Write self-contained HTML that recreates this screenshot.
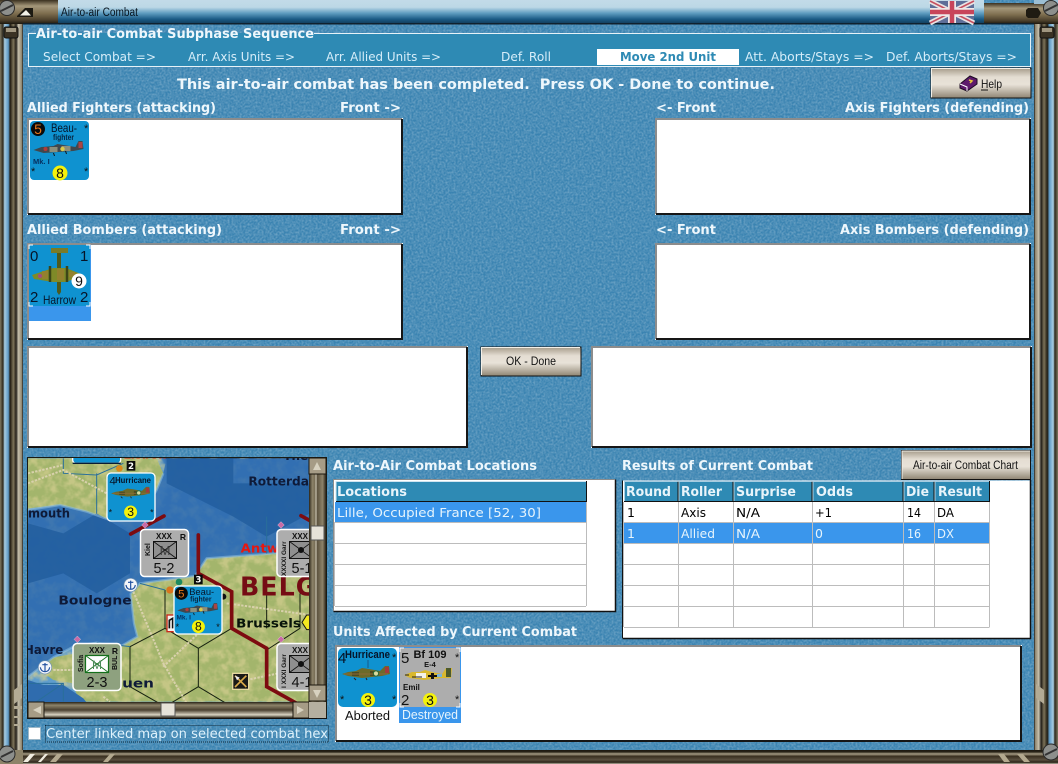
<!DOCTYPE html>
<html><head><meta charset="utf-8"><title>Air-to-air Combat</title>
<style>
html,body{margin:0;padding:0;background:#3a83b1;width:1058px;height:764px;overflow:hidden}
svg{display:block;position:absolute;left:0;top:0}
text{font-family:"DejaVu Sans",sans-serif;white-space:pre}
.b{font-weight:bold;fill:#eef7fc;font-size:13px}
.s{fill:#d6edf9;font-size:12.5px}
.t{fill:#000;font-size:12.5px}
.h{font-weight:bold;fill:#e8f4fa;font-size:13px}
.w{fill:#e6f4fc;font-size:12.5px}
.a{font-family:"Liberation Sans",sans-serif}
.m{font-weight:bold;fill:#0e1a38;font-size:38px}
</style></head><body>
<svg width="1058" height="764" viewBox="0 0 1058 764" xmlns="http://www.w3.org/2000/svg">
<defs>
<filter id="n" x="0" y="0" width="100%" height="100%"><feTurbulence type="fractalNoise" baseFrequency=".5" numOctaves="3" seed="4"/><feColorMatrix values="0 0 0 0 1 0 0 0 0 1 0 0 0 0 1 1.6 0 0 0 -.5"/></filter>
<filter id="l" x="0" y="0" width="100%" height="100%"><feTurbulence type="fractalNoise" baseFrequency=".035" numOctaves="3" seed="7"/><feColorMatrix values="0 0 0 0 .66 0 0 0 0 .62 0 0 0 0 .28 3 0 0 0 -1.2"/></filter>
<filter id="bl"><feGaussianBlur stdDeviation="9"/></filter>
<clipPath id="mc"><rect x="28" y="458" width="281" height="244"/></clipPath>
<linearGradient id="tb" x1="0" y1="0" x2="0" y2="1"><stop offset="0" stop-color="#c3dbe8"/><stop offset=".3" stop-color="#bcd8e6"/><stop offset=".55" stop-color="#5e9cc0"/><stop offset=".8" stop-color="#1a5a85"/><stop offset="1" stop-color="#123a58"/></linearGradient>
<linearGradient id="br" x1="0" y1="0" x2="0" y2="1"><stop offset="0" stop-color="#3a3020"/><stop offset=".25" stop-color="#a4977a"/><stop offset=".55" stop-color="#7f6f50"/><stop offset=".85" stop-color="#4a3e2a"/><stop offset="1" stop-color="#1c170e"/></linearGradient>
<linearGradient id="lf" x1="0" y1="0" x2="1" y2="0"><stop offset="0" stop-color="#7f7861"/><stop offset=".13" stop-color="#2f2a1e"/><stop offset=".2" stop-color="#a8cde2"/><stop offset=".36" stop-color="#5f9ac6"/><stop offset=".44" stop-color="#1f1a10"/><stop offset=".58" stop-color="#7d7359"/><stop offset=".7" stop-color="#24201a"/><stop offset=".8" stop-color="#c6c0ad"/><stop offset=".95" stop-color="#8d846e"/><stop offset="1" stop-color="#111"/></linearGradient>
<linearGradient id="rf" x1="1" y1="0" x2="0" y2="0"><stop offset="0" stop-color="#7f7861"/><stop offset=".13" stop-color="#2f2a1e"/><stop offset=".2" stop-color="#a8cde2"/><stop offset=".36" stop-color="#5f9ac6"/><stop offset=".44" stop-color="#1f1a10"/><stop offset=".58" stop-color="#7d7359"/><stop offset=".7" stop-color="#24201a"/><stop offset=".8" stop-color="#c6c0ad"/><stop offset=".95" stop-color="#8d846e"/><stop offset="1" stop-color="#111"/></linearGradient>
<linearGradient id="bt" x1="0" y1="0" x2="0" y2="1"><stop offset="0" stop-color="#a49a88"/><stop offset=".3" stop-color="#e4ddd2"/><stop offset=".55" stop-color="#e8e2d8"/><stop offset="1" stop-color="#8f8573"/></linearGradient>
<linearGradient id="bb" x1="0" y1="0" x2="0" y2="1"><stop offset="0" stop-color="#1c180f"/><stop offset=".14" stop-color="#2a2418"/><stop offset=".28" stop-color="#a79d85"/><stop offset=".45" stop-color="#3a3020"/><stop offset=".7" stop-color="#5a5040"/><stop offset=".88" stop-color="#2a2418"/><stop offset="1" stop-color="#bdb7a5"/></linearGradient>
<linearGradient id="st" x1="0" y1="0" x2="1" y2="0"><stop offset="0" stop-color="#2a2418"/><stop offset=".2" stop-color="#8d8369"/><stop offset=".5" stop-color="#5e5440"/><stop offset=".8" stop-color="#8d8369"/><stop offset="1" stop-color="#2a2418"/></linearGradient>
<linearGradient id="sh" x1="0" y1="0" x2="0" y2="1"><stop offset="0" stop-color="#2a2418"/><stop offset=".2" stop-color="#8d8369"/><stop offset=".5" stop-color="#4a4030"/><stop offset=".8" stop-color="#d8d2c0"/><stop offset="1" stop-color="#2a2418"/></linearGradient>
<symbol id="hur" viewBox="0 0 50 16"><path d="M0 9 L6 7 L14 6 L20 3 L27 4 L38 6 L43 1 L47 1 L48 9 L40 11 L20 13 L6 11Z" fill="#6c6a2a"/><path d="M10 7h7v4h-7zM28 6h8v5h-8z" fill="#4e4a20"/><path d="M2 9h44" stroke="#8a6a38"/><circle cx="34" cy="8.500" r="2.600" fill="#d8d8a0" stroke="#2b6b3a"/><path d="M43 2h4v6h-4z" fill="#a33a3a"/><path d="M12 13l2 2M24 13l1 2" stroke="#222"/></symbol>
<symbol id="bea" viewBox="0 0 50 16"><path d="M0 10 L8 7 L20 6 L24 4 L30 5 L42 7 L45 1 L49 1 L50 9 L40 11 L10 13Z" fill="#40484e"/><path d="M16 7h8v5h-8zM28 6h9v5h-9z" fill="#8b8e7c"/><circle cx="29" cy="9" r="2.200" fill="#d9c94a"/><circle cx="12" cy="9" r="2" fill="#b03a3a"/><path d="M45 2h4v6h-4z" fill="#a44"/><path d="M20 13l1 3M32 11l1 3" stroke="#111"/></symbol>
<symbol id="bf" viewBox="0 0 50 16"><path d="M0 8 L8 5 L16 5 L21 3 L28 5 L38 7 L42 1 L48 1 L47 11 L38 11 L20 13 L6 11Z" fill="#d9b82e"/><path d="M12 6h10v5H12z" fill="#f4f2e8"/><path d="M27 6h3v6h-3zM24 8h9v2h-9z" fill="#111"/><path d="M33 7h5v3h-5z" fill="#79b4d8"/><path d="M42 1h5v9h-5z" fill="#4d5a2c"/><path d="M1 8h4M8 10h10" stroke="#222"/></symbol>
</defs>

<!-- background -->
<rect width="1058" height="764" fill="#3a83b1"/>
<rect width="1058" height="764" filter="url(#n)" opacity=".3"/>

<!-- frame -->
<rect x="0" y="24" width="23" height="728" fill="url(#lf)"/>
<rect x="1034" y="24" width="24" height="728" fill="url(#rf)"/>
<path d="M14 690l8-6v14l-8 6zM14 706h8v3h-8zM14 716h6v2h-6zM14 724h6v2h-6z" fill="#b3ab95"/>
<path d="M1044 690l-8-6v14l8 6z" fill="#b3ab95"/>
<rect x="4" y="27" width="14" height="11" rx="2" fill="#3a3224" stroke="#111"/>
<rect x="6" y="28" width="10" height="4" fill="#a09680"/>
<rect x="1040" y="27" width="14" height="11" rx="2" fill="#3a3224" stroke="#111"/>
<rect x="1042" y="28" width="10" height="4" fill="#a09680"/>
<rect x="58" y="0" width="926" height="24" fill="url(#tb)"/>
<rect x="0" y="0" width="58" height="24" fill="url(#br)"/>
<rect x="984" y="3" width="74" height="21" fill="url(#br)"/>
<rect x="1034" y="0" width="24" height="4" fill="#9cbfd4"/>
<path d="M17 16 L25 8 L33 8 L33 17 L17 17Z" fill="#1d1a12"/><path d="M20 15.500 L26 10 L31 15.500Z" fill="#f2f0e6"/>
<circle cx="7" cy="8" r="7.500" fill="#8d8f8c" stroke="#2a2a2a"/><path d="M1 11L13 5" stroke="#333" stroke-width="2"/>
<path d="M1028 8h10l3 5-3 5h-10l-2-2v-6z" fill="#1f1b12"/>
<circle cx="1051" cy="8" r="7.500" fill="#8d8f8c" stroke="#2a2a2a"/><path d="M1045 11L1057 5" stroke="#333" stroke-width="2"/>
<rect x="23" y="23" width="1011" height="1.500" fill="#10212e"/>
<text x="61" y="16" class="a" font-size="11.500" fill="#08141e" textLength="77" lengthAdjust="spacingAndGlyphs">Air-to-air Combat</text>
<!-- flag -->
<g>
<rect x="930" y="1" width="44" height="22" fill="#5e6e98"/>
<path d="M930 1L974 23M974 1L930 23" stroke="#e8e4e4" stroke-width="5"/>
<path d="M930 1L974 23M974 1L930 23" stroke="#c65060" stroke-width="1.600"/>
<path d="M952 1V23M930 12H974" stroke="#eee8e8" stroke-width="8"/>
<path d="M952 1V23M930 12H974" stroke="#c8455a" stroke-width="4.500"/>
</g>
<rect x="0" y="750" width="1058" height="14" fill="url(#bb)"/>
<rect x="0" y="750" width="23" height="14" fill="#8d8369"/>
<path d="M23 762l7-8h5l-7 8zM38 762l7-8h3l-7 8z" fill="#f0ece0"/>
<path d="M50 762l7-8h6l-7 8zM103 762l7-8h5l-7 8z" fill="#b3a98f"/>
<path d="M998 754l6 8h6l-6-8zM1017 754l7 8h6l-7-8z" fill="#b3a98f"/>
<circle cx="7" cy="754" r="8" fill="#8d8f8c" stroke="#2a2a2a"/><path d="M1 757L13 751" stroke="#333" stroke-width="2"/>
<circle cx="1051" cy="752" r="8" fill="#8d8f8c" stroke="#2a2a2a"/><path d="M1045 755L1057 749" stroke="#333" stroke-width="2"/>

<!-- sequence panel -->
<rect x="28" y="33" width="1003" height="33" fill="#2e8ab4"/>
<path d="M36 33.500H28.500V66.500H1030.500V33.500H314" fill="none" stroke="#e6f2f8" stroke-width="1"/>
<rect x="597" y="49" width="142" height="16" fill="#fff"/>
<text x="36" y="38" class="b" textLength="278" lengthAdjust="spacingAndGlyphs">Air-to-air Combat Subphase Sequence</text>
<text x="43" y="61" class="s" textLength="113" lengthAdjust="spacingAndGlyphs">Select Combat =&gt;</text>
<text x="188" y="61" class="s" textLength="107" lengthAdjust="spacingAndGlyphs">Arr. Axis Units =&gt;</text>
<text x="326" y="61" class="s" textLength="115" lengthAdjust="spacingAndGlyphs">Arr. Allied Units =&gt;</text>
<text x="501" y="61" class="s" textLength="50" lengthAdjust="spacingAndGlyphs">Def. Roll</text>
<text x="620" y="61" class="s" font-weight="bold" style="fill:#2e8ab4" textLength="96" lengthAdjust="spacingAndGlyphs">Move 2nd Unit</text>
<text x="745" y="61" class="s" textLength="129" lengthAdjust="spacingAndGlyphs">Att. Aborts/Stays =&gt;</text>
<text x="886" y="61" class="s" textLength="131" lengthAdjust="spacingAndGlyphs">Def. Aborts/Stays =&gt;</text>

<text x="177" y="89" class="b" style="font-size:14.500px" textLength="598" lengthAdjust="spacingAndGlyphs">This air-to-air combat has been completed.  Press OK - Done to continue.</text>

<!-- help -->
<rect x="931" y="68" width="100" height="30" fill="url(#bt)" stroke="#111"/>
<path d="M931.500 97.500V68.500H1030" fill="none" stroke="#f4f0e8"/>
<path d="M960 84l10-8 7 3 0 5-10 7-7-3z" fill="#5e1a6c" stroke="#1c0a22"/>
<path d="M960 84l7 3 0 4" fill="none" stroke="#fff"/><path d="M969 80l3 1-2 2" fill="none" stroke="#e8c93a" stroke-width="1.500"/>
<text x="981" y="88" class="a" font-size="12" fill="#111" textLength="21" lengthAdjust="spacingAndGlyphs">Help</text>
<path d="M981 90h7" stroke="#111"/>

<!-- labels -->
<text x="27" y="112" class="b" textLength="189" lengthAdjust="spacingAndGlyphs">Allied Fighters (attacking)</text>
<text x="340" y="112" class="b" textLength="61" lengthAdjust="spacingAndGlyphs">Front -&gt;</text>
<text x="656" y="112" class="b" textLength="60" lengthAdjust="spacingAndGlyphs">&lt;- Front</text>
<text x="845" y="112" class="b" textLength="184" lengthAdjust="spacingAndGlyphs">Axis Fighters (defending)</text>
<text x="27" y="234" class="b" textLength="195" lengthAdjust="spacingAndGlyphs">Allied Bombers (attacking)</text>
<text x="340" y="234" class="b" textLength="61" lengthAdjust="spacingAndGlyphs">Front -&gt;</text>
<text x="656" y="234" class="b" textLength="60" lengthAdjust="spacingAndGlyphs">&lt;- Front</text>
<text x="840" y="234" class="b" textLength="189" lengthAdjust="spacingAndGlyphs">Axis Bombers (defending)</text>

<!-- boxes -->
<g fill="#fff">
<rect x="27" y="118" width="376" height="97"/>
<rect x="655" y="118" width="376" height="97"/>
<rect x="27" y="243" width="376" height="97"/>
<rect x="655" y="243" width="376" height="97"/>
<rect x="27" y="346" width="441" height="102"/>
<rect x="591" y="346" width="441" height="102"/>
</g>
<g fill="none" stroke="#8c8c8c" stroke-width="2">
<path d="M28 214V119H402M656 214V119H1030M28 339V244H402M656 339V244H1030M28 447V347H467M592 447V347H1031"/>
</g>
<g fill="none" stroke="#161616" stroke-width="2">
<path d="M28 214H402V119M656 214H1030V119M28 339H402V244M656 339H1030V244M28 447H467V347M592 447H1031V347"/>
</g>

<!-- Beau counter -->
<rect x="30" y="121" width="59" height="59" rx="4" fill="#0f92d0"/>
<circle cx="38" cy="129" r="7" fill="#0a0a0a"/>
<text x="38" y="134" text-anchor="middle" font-size="14" style="fill:#e8761a" class="a">5</text>
<text x="51" y="132" font-size="12" class="a" textLength="26" lengthAdjust="spacingAndGlyphs" fill="#061428">Beau-</text>
<text x="53" y="140" font-size="8.500" font-weight="bold" class="a" textLength="21" lengthAdjust="spacingAndGlyphs" fill="#062440">fighter</text>
<use href="#bea" x="33" y="140" width="51" height="16"/>
<text x="33" y="164" font-size="7.500" font-weight="bold" class="a" fill="#063060">Mk. I</text>
<text x="84" y="132" font-size="11" fill="#111" class="a">*</text>
<text x="31" y="175" font-size="11" fill="#111" class="a">*</text>
<text x="84" y="175" font-size="11" fill="#111" class="a">*</text>
<circle cx="60" cy="173" r="7.500" fill="#f4f20c"/>
<text x="60" y="178" text-anchor="middle" font-size="14" class="a" fill="#111">8</text>

<!-- Harrow -->
<rect x="29" y="245" width="62" height="76" fill="#3a96ec"/>
<rect x="29" y="245" width="61" height="61" fill="#0f92d0"/>
<path d="M29 249v-4h4M86 245h4v4M29 302v4h4M86 306h4v-4" stroke="#fff" fill="none"/>
<path d="M57 250h4v42l-2 3-2-3z" fill="#4d5a1e"/><path d="M51 248h17v5H51z" fill="#7a7b28"/>
<path d="M32 275l21-7h13l15 6 0 3-16 5H53l-19-3z" fill="#7f8a28"/>
<path d="M42 271h6v8h-6zM57 269h7v11h-7zM69 272h6v5h-6z" fill="#94812e"/><circle cx="40" cy="276" r="2" fill="#a24a86"/>
<path d="M50 266v16M67 266v16" stroke="#3d4618" stroke-width="2.500"/>
<text x="30" y="261" font-size="15" class="a" fill="#061428">0</text>
<text x="80" y="261" font-size="15" class="a" fill="#061428">1</text>
<text x="30" y="302" font-size="15" class="a" fill="#061428">2</text>
<text x="80" y="302" font-size="15" class="a" fill="#061428">2</text>
<text x="43" y="304" font-size="12" class="a" fill="#061428" textLength="33" lengthAdjust="spacingAndGlyphs">Harrow</text>
<circle cx="79" cy="281" r="7.500" fill="#fff"/>
<text x="79" y="286" text-anchor="middle" font-size="14" class="a" fill="#111">9</text>

<!-- OK -->
<rect x="481" y="347" width="100" height="29" fill="url(#bt)" stroke="#111"/>
<path d="M481.500 375V347.500H580" fill="none" stroke="#f4f0e8"/>
<text x="506" y="365" class="a" font-size="11.500" fill="#111" textLength="50" lengthAdjust="spacingAndGlyphs">OK - Done</text>

<!-- map -->
<rect x="27" y="457" width="300" height="262" fill="#1a1a12"/>
<g clip-path="url(#mc)">
<g transform="translate(0,450) scale(.33333)">
<rect x="84" y="25" width="845" height="730" fill="#2b68aa"/>
<path d="M84 25H470L490 90 450 200 330 215 260 190 180 170 84 180Z" fill="#5f9dcd" stroke="#5f9dcd" stroke-width="34" filter="url(#bl)"/>
<path d="M930 300 800 310 620 330 580 380 420 400 390 430 400 520 410 560 360 590 290 575 220 590 160 625 84 690 84 755 930 755Z" fill="#5f9dcd" stroke="#5f9dcd" stroke-width="36" filter="url(#bl)"/>
<path d="M84 25H470L490 70 470 120 430 190 330 210 260 185 180 165 84 175Z" fill="#a3b56c"/>
<path d="M930 300 800 312 620 325 585 378 420 400 392 432 402 520 412 560 360 590 290 578 220 590 230 650 216 700 240 755 930 755Z" fill="#a3b56c"/>
<path d="M110 655 160 622 218 612 218 700 160 690Z" fill="#a3b56c"/>
<rect x="84" y="25" width="845" height="730" filter="url(#l)" opacity=".7"/>
<path d="M84 690 130 705 190 705 250 745 262 760 84 760Z" fill="#2f6cae"/>
<path d="M500 25H930V300L800 312 620 325 585 378 420 400 392 432 402 520 412 560 360 590 290 578 220 590 160 622 84 680V180L180 165 260 185 330 210 430 190 470 120 490 70Z" fill="#3370b2" opacity=".9"/>
<path d="M500 25H700L700 100 600 150 500 100ZM700 100H930V190L800 260 700 200 600 150ZM84 220 190 250 290 190 390 250 390 370 290 430 190 370 84 400Z" fill="#225e9f" opacity=".85"/>
<path d="M84 180 180 165 260 185 330 210 430 190 470 120 490 70M930 300 800 312 620 325 585 378 420 400 392 432 402 520 412 560 360 590 290 578 220 590 160 622 84 680" fill="none" stroke="#8cbde0" stroke-width="7" opacity=".55"/>
<!-- hex lines -->
<path d="M495 420V535L595 595 695 535M595 595V710M390 590V710L495 770M495 535 390 590M595 710 495 770M595 710 695 770M800 600 700 535M800 600 900 535M900 535V430M800 430V535" fill="none" stroke="#15200f" stroke-width="3"/>
<path d="M290 70V190M190 25V70L290 75 370 40M420 400 495 420M84 700H190V755M190 700 110 755M800 200V310M290 578 390 590" fill="none" stroke="#2a6f9a" stroke-width="3"/>
<!-- roads -->
<g fill="none" stroke="#d9d1ac" stroke-width="6" stroke-dasharray="7 4">
<path d="M400 425 490 640 560 760M490 650 590 555M680 460 930 495M84 100 190 60 320 130M740 690 930 650M84 70 190 45M160 660H218M310 740 330 755"/>
</g>
<!-- border -->
<g fill="none" stroke="#7d0b10" stroke-width="11" stroke-linecap="round">
<path d="M595 255V370L695 425V535L800 595V710L890 760M392 252 492 198M903 197 930 212"/>
</g>
<circle cx="670" cy="440" r="9" fill="#111"/>
<!-- text -->
<text x="84" y="202" class="m" textLength="126" lengthAdjust="spacingAndGlyphs">mouth</text>
<text x="745" y="107" class="m" textLength="220" lengthAdjust="spacingAndGlyphs">Rotterdam</text>
<text x="175" y="463" class="m" textLength="220" lengthAdjust="spacingAndGlyphs">Boulogne</text>
<text x="72" y="612" class="m" textLength="118" lengthAdjust="spacingAndGlyphs">Havre</text>
<text x="300" y="712" class="m" textLength="162" lengthAdjust="spacingAndGlyphs">Rouen</text>
<text x="708" y="532" class="m" style="fill:#08140a" textLength="195" lengthAdjust="spacingAndGlyphs">Brussels</text>
<text x="722" y="308" class="m" style="fill:#e81810" textLength="190" lengthAdjust="spacingAndGlyphs">Antwerp</text>
<text x="720" y="436" style="fill:#750c14;font-size:76px;font-weight:bold;letter-spacing:3px">BELGIUM</text>
<text x="370" y="25" class="m" style="fill:#d8241a" textLength="130" lengthAdjust="spacingAndGlyphs">Lisbon</text>
<text x="850" y="30" class="m" textLength="75" lengthAdjust="spacingAndGlyphs">The</text>
<!-- anchors -->
<g><circle cx="392" cy="405" r="20" fill="#f4f6fa" stroke="#7090b0" stroke-width="2"/><path d="M392 392v26M384 397h16M378 405q2 13 14 13t14-13" fill="none" stroke="#2050a0" stroke-width="3.500"/></g>
<g><circle cx="135" cy="652" r="20" fill="#f4f6fa" stroke="#7090b0" stroke-width="2"/><path d="M135 639v26M127 644h16M121 652q2 13 14 13t14-13" fill="none" stroke="#2050a0" stroke-width="3.500"/></g>
<path d="M920 495l-14 22 14 22h30v-44z" fill="#f4e820" stroke="#111" stroke-width="3"/>
<!-- mine -->
<rect x="698" y="670" width="48" height="48" fill="#1a1a18" stroke="#e6d9a0" stroke-width="4"/>
<path d="M705 677l34 34M739 677l-34 34" stroke="#d9a94a" stroke-width="5"/><path d="M705 677l14 6-8 8z" fill="#eee"/>
<!-- top partial counter -->
<rect x="218" y="-20" width="144" height="60" rx="10" fill="#0f92d0" stroke="#fff" stroke-width="4"/>
<path d="M218 40h144" stroke="#0a1c33" stroke-width="4"/>
<!-- markers -->
<g><circle cx="358" cy="55" r="10" fill="#d98a1c"/><rect x="380" y="33" width="26" height="29" fill="#0a0a0a"/><text x="393" y="57" text-anchor="middle" style="fill:#fff;font-size:26px;font-weight:bold">2</text>
<rect x="582" y="374" width="26" height="29" fill="#0a0a0a"/><text x="595" y="398" text-anchor="middle" style="fill:#fff;font-size:26px;font-weight:bold">3</text>
<circle cx="537" cy="396" r="10" fill="#1d8a60"/><circle cx="510" cy="420" r="11" fill="#d9741c"/>
<path d="M435 215l10 10-10 10-10-10zM232 558l10 10-10 10-10-10zM843 215l10 10-10 10-10-10zM843 558l10 10-10 10-10-10z" fill="#c96aa6" stroke="#eee"/>
<rect x="501" y="495" width="26" height="50" fill="#f4f2ee" stroke="#c8281a" stroke-width="4"/><path d="M508 535v-24l10-6v30" stroke="#111" stroke-width="5" fill="none"/>
</g>
</g>

<!-- Hurricane on map -->
<g transform="translate(107,473) scale(.8136)">
<rect x="0" y="0" width="59" height="59" rx="5" fill="#0f92d0" stroke="#fff" stroke-width="1.600"/>
<text x="3" y="14" font-size="14" class="a" fill="#061428">4</text>
<text x="10" y="12" font-size="10.500" font-weight="bold" class="a" fill="#061428" textLength="44" lengthAdjust="spacingAndGlyphs">Hurricane</text>
<use href="#hur" x="5" y="16" width="50" height="16"/>
<circle cx="29" cy="48" r="8" fill="#f4f20c"/><text x="29" y="53" text-anchor="middle" font-size="15" class="a" fill="#111">3</text>
<text x="2" y="52" font-size="11" class="a" fill="#111">*</text><text x="53" y="52" font-size="11" class="a" fill="#111">*</text>
</g>
<!-- Beau on map -->
<g transform="translate(174,586) scale(.8136)">
<rect x="0" y="0" width="59" height="59" rx="5" fill="#0f92d0" stroke="#fff" stroke-width="1.600"/>
<circle cx="9" cy="9" r="8" fill="#0a0a0a"/><text x="9" y="14" text-anchor="middle" font-size="14" style="fill:#e8761a" class="a">5</text>
<text x="34" y="11" text-anchor="middle" font-size="11.500" class="a" fill="#061428">Beau-</text>
<text x="33" y="19" text-anchor="middle" font-size="8.500" font-weight="bold" class="a" fill="#062440">fighter</text>
<use href="#bea" x="3" y="20" width="52" height="16"/>
<text x="3" y="41" font-size="8" font-weight="bold" class="a" fill="#063060">Mk. I</text>
<circle cx="30" cy="50" r="8" fill="#f4f20c"/><text x="30" y="55" text-anchor="middle" font-size="15" class="a" fill="#111">8</text>
<text x="2" y="54" font-size="11" class="a" fill="#111">*</text><text x="52" y="54" font-size="11" class="a" fill="#111">*</text>
</g>
<!-- Kiel -->
<g>
<rect x="140.500" y="529.500" width="48" height="47" rx="4" fill="#adadad" stroke="#fff" stroke-width="1.500"/>
<text x="164" y="539" text-anchor="middle" font-size="8" class="a" font-weight="bold" fill="#111">XXX</text>
<text x="183" y="540" text-anchor="middle" font-size="8.500" class="a" font-weight="bold" fill="#111">R</text>
<rect x="153.500" y="541.500" width="23" height="17" fill="#8f8f8f" stroke="#111"/>
<path d="M153.500 541.500l23 17M176.500 541.500l-23 17" stroke="#111" stroke-width=".8"/>
<text x="165" y="555" text-anchor="middle" font-size="13" class="a" fill="#3a3a3a">M</text>
<text transform="translate(150,556) rotate(-90)" font-size="7" class="a" font-weight="bold" fill="#111">Kiel</text>
<text x="164" y="573" text-anchor="middle" font-size="14.500" class="a" fill="#111">5-2</text>
</g>
<!-- XXXII right -->
<g>
<rect x="277" y="529.500" width="48" height="47" rx="4" fill="#adadad" stroke="#fff" stroke-width="1.500"/>
<text x="300" y="539" text-anchor="middle" font-size="8" class="a" font-weight="bold" fill="#111">XXX</text>
<rect x="289.500" y="541.500" width="23" height="17" fill="#8f8f8f" stroke="#111"/>
<path d="M289.500 541.500l23 17M312.500 541.500l-23 17" stroke="#111" stroke-width=".8"/><circle cx="301" cy="550" r="3" fill="#111"/>
<text transform="translate(286,576) rotate(-90)" font-size="6.500" class="a" font-weight="bold" fill="#111">XXXXI Garr</text>
<text x="302" y="573" text-anchor="middle" font-size="14.500" class="a" fill="#111">5-1</text>
<rect x="277" y="643.500" width="48" height="47" rx="4" fill="#adadad" stroke="#fff" stroke-width="1.500"/>
<text x="300" y="653" text-anchor="middle" font-size="8" class="a" font-weight="bold" fill="#111">XXX</text>
<rect x="289.500" y="655.500" width="23" height="17" fill="#8f8f8f" stroke="#111"/>
<path d="M289.500 655.500l23 17M312.500 655.500l-23 17" stroke="#111" stroke-width=".8"/><circle cx="301" cy="664" r="3" fill="#111"/>
<text transform="translate(286,688) rotate(-90)" font-size="6.500" class="a" font-weight="bold" fill="#111">I XXXI Garr</text>
<text x="302" y="687" text-anchor="middle" font-size="14.500" class="a" fill="#111">4-1</text>
</g>
<!-- Sofia -->
<g>
<rect x="73" y="643.500" width="48" height="47" rx="4" fill="#8ea17f" stroke="#fff" stroke-width="1.500"/>
<text x="97" y="653" text-anchor="middle" font-size="8" class="a" font-weight="bold" fill="#111">XXX</text>
<text x="115" y="654" text-anchor="middle" font-size="8.500" class="a" font-weight="bold" fill="#111">R</text>
<rect x="85.500" y="655.500" width="23" height="17" fill="#fff" stroke="#14701c" stroke-width="1.200"/>
<path d="M85.500 655.500l23 17M108.500 655.500l-23 17" stroke="#14701c" stroke-width=".8"/>
<text x="97" y="669" text-anchor="middle" font-size="12" class="a" fill="#4a8a58">M</text>
<text transform="translate(83,672) rotate(-90)" font-size="7" class="a" font-weight="bold" fill="#111">Sofia</text>
<text transform="translate(117,670) rotate(-90)" font-size="7" class="a" font-weight="bold" fill="#111">BUL</text>
<text x="97" y="687" text-anchor="middle" font-size="14.500" class="a" fill="#111">2-3</text>
</g>
</g>
<!-- scrollbars -->
<rect x="309" y="458" width="17" height="244" fill="url(#st)"/>
<path d="M316 474V690" stroke="#d8d2c0" stroke-width="1"/>
<rect x="309" y="458" width="17" height="16" fill="#a69c86" stroke="#1c170e"/><path d="M317 462l4 8h-8z" fill="#d8d2c0"/>
<rect x="309" y="685" width="17" height="16" fill="#a69c86" stroke="#1c170e"/><path d="M313 690h8l-4 8z" fill="#d8d2c0"/>
<rect x="311" y="526" width="13" height="14" fill="#e6e2d8" stroke="#555"/>
<rect x="28" y="702" width="281" height="16" fill="url(#sh)"/>
<rect x="28" y="702" width="16" height="16" fill="#a69c86" stroke="#1c170e"/><path d="M33 710l8-4v8z" fill="#d8d2c0"/>
<rect x="293" y="702" width="16" height="16" fill="#a69c86" stroke="#1c170e"/><path d="M304 710l-7-4v8z" fill="#d8d2c0"/>
<rect x="161" y="703" width="14" height="13" fill="#e6e2d8" stroke="#555"/>
<rect x="309" y="702" width="17" height="16" fill="#b5afa0"/>
<rect x="28" y="718" width="299" height="1" fill="#111"/>

<!-- checkbox -->
<rect x="28.500" y="727.500" width="12" height="12" fill="#fff" stroke="#9db8c8"/>
<rect x="45.500" y="725.500" width="283" height="16.500" fill="none" stroke="#0e2a3c" stroke-dasharray="1 1"/>
<text x="46" y="738" class="s" style="font-size:13px;fill:#dff2fc" textLength="282" lengthAdjust="spacingAndGlyphs">Center linked map on selected combat hex</text>

<!-- titles -->
<text x="333" y="470" class="b" textLength="204" lengthAdjust="spacingAndGlyphs">Air-to-Air Combat Locations</text>
<text x="622" y="470" class="b" textLength="191" lengthAdjust="spacingAndGlyphs">Results of Current Combat</text>
<text x="333" y="636" class="b" textLength="244" lengthAdjust="spacingAndGlyphs">Units Affected by Current Combat</text>

<!-- chart button -->
<rect x="901.500" y="450.500" width="129" height="29" fill="url(#bt)" stroke="#111"/>
<path d="M902 479V451H1030" fill="none" stroke="#f4f0e8"/>
<text x="913" y="469" class="a" font-size="11.500" fill="#111" textLength="105" lengthAdjust="spacingAndGlyphs">Air-to-air Combat Chart</text>

<!-- locations -->
<rect x="333.500" y="479.500" width="282" height="132" fill="#fff"/>
<path d="M333.500 611.500H615.500V479.500" fill="none" stroke="#111" stroke-width="1.500"/>
<path d="M333.500 611V479.500H615" fill="none" stroke="#8c8c8c"/>
<rect x="336" y="481" width="250" height="20" fill="#2e8ab4"/>
<path d="M336 501.500H586.500V481" fill="none" stroke="#111"/>
<path d="M336 501V481.500H586" fill="none" stroke="#cfe4f0"/>
<rect x="335" y="502" width="251" height="20" fill="#3a96ec"/>
<path d="M335 522.500H586M335 543.500H586M335 564.500H586M335 585.500H586M335 606.500H586M586.500 502V606M334.500 522V606" stroke="#bcbcbc" fill="none"/>
<text x="337" y="496" class="h" textLength="70" lengthAdjust="spacingAndGlyphs">Locations</text>
<text x="337" y="517" class="w" textLength="204" lengthAdjust="spacingAndGlyphs">Lille, Occupied France [52, 30]</text>

<!-- results -->
<rect x="622.500" y="480.500" width="408" height="158" fill="#fff"/>
<path d="M622.500 638.500H1030.500V480" fill="none" stroke="#111" stroke-width="1.500"/>
<path d="M622.500 638V480.500" stroke="#111" stroke-width="1"/>
<g>
<rect x="624" y="481" width="54" height="21" fill="#2e8ab4"/><rect x="678" y="481" width="55" height="21" fill="#2e8ab4"/><rect x="733" y="481" width="79" height="21" fill="#2e8ab4"/><rect x="812" y="481" width="91" height="21" fill="#2e8ab4"/><rect x="903" y="481" width="31" height="21" fill="#2e8ab4"/><rect x="934" y="481" width="55" height="21" fill="#2e8ab4"/>
<path d="M624 501.500H989.500V481M678 481V501M733 481V501M812 481V501M903 481V501M934 481V501" fill="none" stroke="#111"/>
<path d="M624.500 501V481.500H989M679 482V501M734 482V501M813 482V501M904 482V501M935 482V501" fill="none" stroke="#cfe4f0" stroke-width=".8"/>
</g>
<rect x="624" y="523" width="365" height="20" fill="#3a96ec"/>
<path d="M624 522.500H989.500M624 543.500H989.500M624 564.500H989.500M624 585.500H989.500M624 606.500H989.500M624 627.500H989.500M678.500 502V627M733.500 502V627M812.500 502V627M903.500 502V627M934.500 502V627M989.500 502V627M623.500 502V627" fill="none" stroke="#bcbcbc"/>
<text x="626" y="496" class="h" textLength="45" lengthAdjust="spacingAndGlyphs">Round</text>
<text x="681" y="496" class="h" textLength="41" lengthAdjust="spacingAndGlyphs">Roller</text>
<text x="736" y="496" class="h" textLength="60" lengthAdjust="spacingAndGlyphs">Surprise</text>
<text x="816" y="496" class="h" textLength="37" lengthAdjust="spacingAndGlyphs">Odds</text>
<text x="906" y="496" class="h" textLength="23" lengthAdjust="spacingAndGlyphs">Die</text>
<text x="938" y="496" class="h" textLength="44" lengthAdjust="spacingAndGlyphs">Result</text>
<text x="627" y="517" class="t">1</text><text x="681" y="517" class="t" textLength="25" lengthAdjust="spacingAndGlyphs">Axis</text><text x="736" y="517" class="t" textLength="24" lengthAdjust="spacingAndGlyphs">N/A</text><text x="815" y="517" class="t" textLength="17" lengthAdjust="spacingAndGlyphs">+1</text><text x="907" y="517" class="t" textLength="14" lengthAdjust="spacingAndGlyphs">14</text><text x="937" y="517" class="t" textLength="17" lengthAdjust="spacingAndGlyphs">DA</text>
<text x="627" y="538" class="w">1</text><text x="681" y="538" class="w" textLength="34" lengthAdjust="spacingAndGlyphs">Allied</text><text x="736" y="538" class="w" textLength="24" lengthAdjust="spacingAndGlyphs">N/A</text><text x="815" y="538" class="w">0</text><text x="907" y="538" class="w" textLength="14" lengthAdjust="spacingAndGlyphs">16</text><text x="937" y="538" class="w" textLength="17" lengthAdjust="spacingAndGlyphs">DX</text>

<!-- units affected -->
<rect x="335" y="645" width="687" height="97" fill="#fff"/>
<path d="M336 741V646H1021" fill="none" stroke="#8c8c8c" stroke-width="2"/>
<path d="M336 741H1021V646" fill="none" stroke="#161616" stroke-width="2"/>
<rect x="338" y="648" width="59" height="59" rx="5" fill="#0f92d0"/>
<text x="338" y="663" font-size="15" class="a" fill="#061428">4</text>
<text x="345" y="658" font-size="11" font-weight="bold" class="a" fill="#061428" textLength="45" lengthAdjust="spacingAndGlyphs">Hurricane</text>
<path d="M368 660v8" stroke="#1a5a8a"/>
<use href="#hur" x="342" y="665" width="50" height="16"/>
<text x="340" y="703" font-size="11" class="a" fill="#111">*</text><text x="392" y="661" font-size="11" class="a" fill="#111">*</text><text x="392" y="703" font-size="11" class="a" fill="#111">*</text>
<circle cx="368" cy="700" r="7" fill="#f4f20c"/><text x="368" y="705" text-anchor="middle" font-size="14" class="a" fill="#111">3</text>
<text x="345" y="720" class="a" font-size="13" fill="#111" textLength="45" lengthAdjust="spacingAndGlyphs">Aborted</text>

<rect x="399" y="647" width="62" height="76" fill="#3a96ec"/>
<rect x="400" y="648" width="60" height="59" fill="#adadad"/>
<path d="M400 652v-4h4M456 648h4v4M400 703v4h4M456 707h4v-4" stroke="#fff" fill="none"/>
<text x="401" y="663" font-size="15" class="a" fill="#111">5</text>
<text x="430" y="658" text-anchor="middle" font-size="11" font-weight="bold" class="a" fill="#111">Bf 109</text>
<text x="430" y="667" text-anchor="middle" font-size="7.500" font-weight="bold" class="a" fill="#111">E-4</text>
<use href="#bf" x="402" y="667" width="54" height="16"/>
<text x="403" y="690" font-size="8" font-weight="bold" class="a" fill="#111">Emil</text>
<text x="401" y="705" font-size="15" class="a" fill="#111">2</text>
<text x="455" y="661" font-size="11" class="a" fill="#111">*</text><text x="455" y="703" font-size="11" class="a" fill="#111">*</text>
<circle cx="430" cy="700" r="7" fill="#f4f20c"/><text x="430" y="705" text-anchor="middle" font-size="14" class="a" fill="#111">3</text>
<text x="402" y="719" class="a" font-size="13" fill="#e6f4fc" textLength="56" lengthAdjust="spacingAndGlyphs">Destroyed</text>
</svg>
</body></html>
